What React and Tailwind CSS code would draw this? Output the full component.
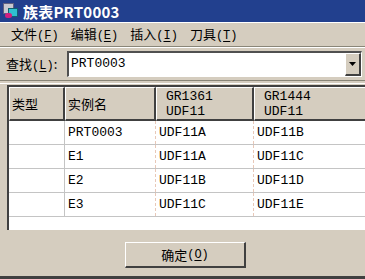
const mono = "font-['Liberation_Mono','Noto_Sans_CJK_SC',monospace]"
const cjk = "font-['Noto_Sans_CJK_SC','Liberation_Sans',sans-serif]"

function Key({ k }) {
  return (
    <span className={`${mono} text-[12px]`}>
      (<span className="underline underline-offset-2">{k}</span>)
    </span>
  )
}

const rows = [
  ['', 'PRT0003', 'UDF11A', 'UDF11B'],
  ['', 'E1', 'UDF11A', 'UDF11C'],
  ['', 'E2', 'UDF11B', 'UDF11D'],
  ['', 'E3', 'UDF11C', 'UDF11E'],
]

const cols = ['w-[56px]', 'w-[91px]', 'w-[98px]', 'w-[120px]']

const cellLine = [
  'border-r border-r-[#c4c4c4]',
  'pl-[3px] border-r border-dashed border-r-[#e8c8b8]',
  'pl-[3px] border-r border-dashed border-r-[#e8c8b8]',
  'pl-[3px]',
]

function HeadCell({ w, children, pad = 'pl-[2px]' }) {
  return (
    <div className={`${w} shrink-0 h-full border-t border-l border-t-white border-l-white border-r-2 border-b-2 border-r-[#404040] border-b-[#404040] flex flex-col justify-center ${pad} leading-[15px] text-[13px] text-black`}>
      {children}
    </div>
  )
}

export default function App() {
  return (
    <div className="w-[365px] h-[279px] overflow-hidden bg-[#d5cdbf] flex flex-col text-black select-none">
      {/* title bar */}
      <div className="h-[22px] shrink-0 bg-[#22408e] flex items-center pl-[3px] gap-[4px]">
        <div className="relative w-[16px] h-[16px]">
          <div className="absolute left-0 top-0 w-[11px] h-[11px] bg-[#c8c8d0] border border-[#606080]" />
          <div className="absolute left-[5px] top-[5px] w-[10px] h-[9px] bg-[#2ec0d0] border border-[#106070]" />
          <div className="absolute left-[2px] top-[10px] w-[7px] h-[5px] rounded-full bg-[#d02080]" />
        </div>
        <span className={`${cjk} text-white font-bold text-[15px] leading-none tracking-[0.2px]`}>族表PRT0003</span>
      </div>

      {/* menu bar */}
      <div className={`${cjk} h-[25px] shrink-0 border-t border-t-white border-b border-b-[#8a8678] flex items-center pl-[11px] gap-[12px] text-[13px]`}>
        <span>文件<Key k="F" /></span>
        <span>编辑<Key k="E" /></span>
        <span>插入<Key k="I" /></span>
        <span>刀具<Key k="T" /></span>
      </div>

      {/* find row */}
      <div className="h-[33px] shrink-0 border-t border-t-white flex items-center pl-[6px] pr-[3px]">
        <span className={`${cjk} text-[13px] w-[61px] shrink-0`}>
          查找<Key k="L" />:
        </span>
        <div className="flex-1 h-[26px] border-t-2 border-l-2 border-t-[#505050] border-l-[#505050] border-b border-r border-b-white border-r-white bg-white flex items-stretch">
          <span className={`${mono} flex-1 text-[13px] leading-[22px] pl-[2px]`}>PRT0003</span>
          <div className="w-[16px] shrink-0 bg-[#d5cdbf] border-t border-l border-t-white border-l-white border-r-2 border-b-2 border-r-[#404040] border-b-[#404040] flex items-center justify-center">
            <svg width="8" height="5" viewBox="0 0 8 5"><path d="M0 0h7L3.5 4z" fill="#000" /></svg>
          </div>
        </div>
      </div>

      {/* separator */}
      <div className="h-[4px] shrink-0 border-t border-t-[#8a8678] border-b border-b-white" />

      {/* table */}
      <div className="ml-[7px] mt-[1px] h-[145px] shrink-0 bg-white border-t-2 border-l-2 border-t-[#404040] border-l-[#404040] overflow-hidden">
        <div className="h-[34px] flex bg-[#d5cdbf]">
          <HeadCell w={cols[0]}><span className={cjk}>类型</span></HeadCell>
          <HeadCell w={cols[1]}><span className={cjk}>实例名</span></HeadCell>
          <HeadCell w={cols[2]} pad="pl-[9px]">
            <span className={mono}>GR1361</span>
            <span className={mono}>UDF11</span>
          </HeadCell>
          <HeadCell w={cols[3]} pad="pl-[9px]">
            <span className={mono}>GR1444</span>
            <span className={mono}>UDF11</span>
          </HeadCell>
        </div>
        {rows.map((r, i) => (
          <div key={i} className="h-[24px] flex border-b border-b-[#c4c4c4]">
            {r.map((c, j) => (
              <div key={j} className={`${mono} ${cols[j]} ${cellLine[j]} shrink-0 h-full flex items-center text-[13px]`}>
                {c}
              </div>
            ))}
          </div>
        ))}
      </div>

      {/* button */}
      <div className="flex-1 flex justify-center items-start pt-[12px] pl-[6px]">
        <button
          type="button"
          className={`${cjk} w-[121px] h-[26px] border-t border-l border-t-white border-l-white border-r-2 border-b-2 border-r-[#404040] border-b-[#404040] text-[13px] flex items-center justify-center`}
        >
          确定<Key k="O" />
        </button>
      </div>
      <div className="h-[3px] shrink-0 bg-[#404040]" />
    </div>
  )
}
